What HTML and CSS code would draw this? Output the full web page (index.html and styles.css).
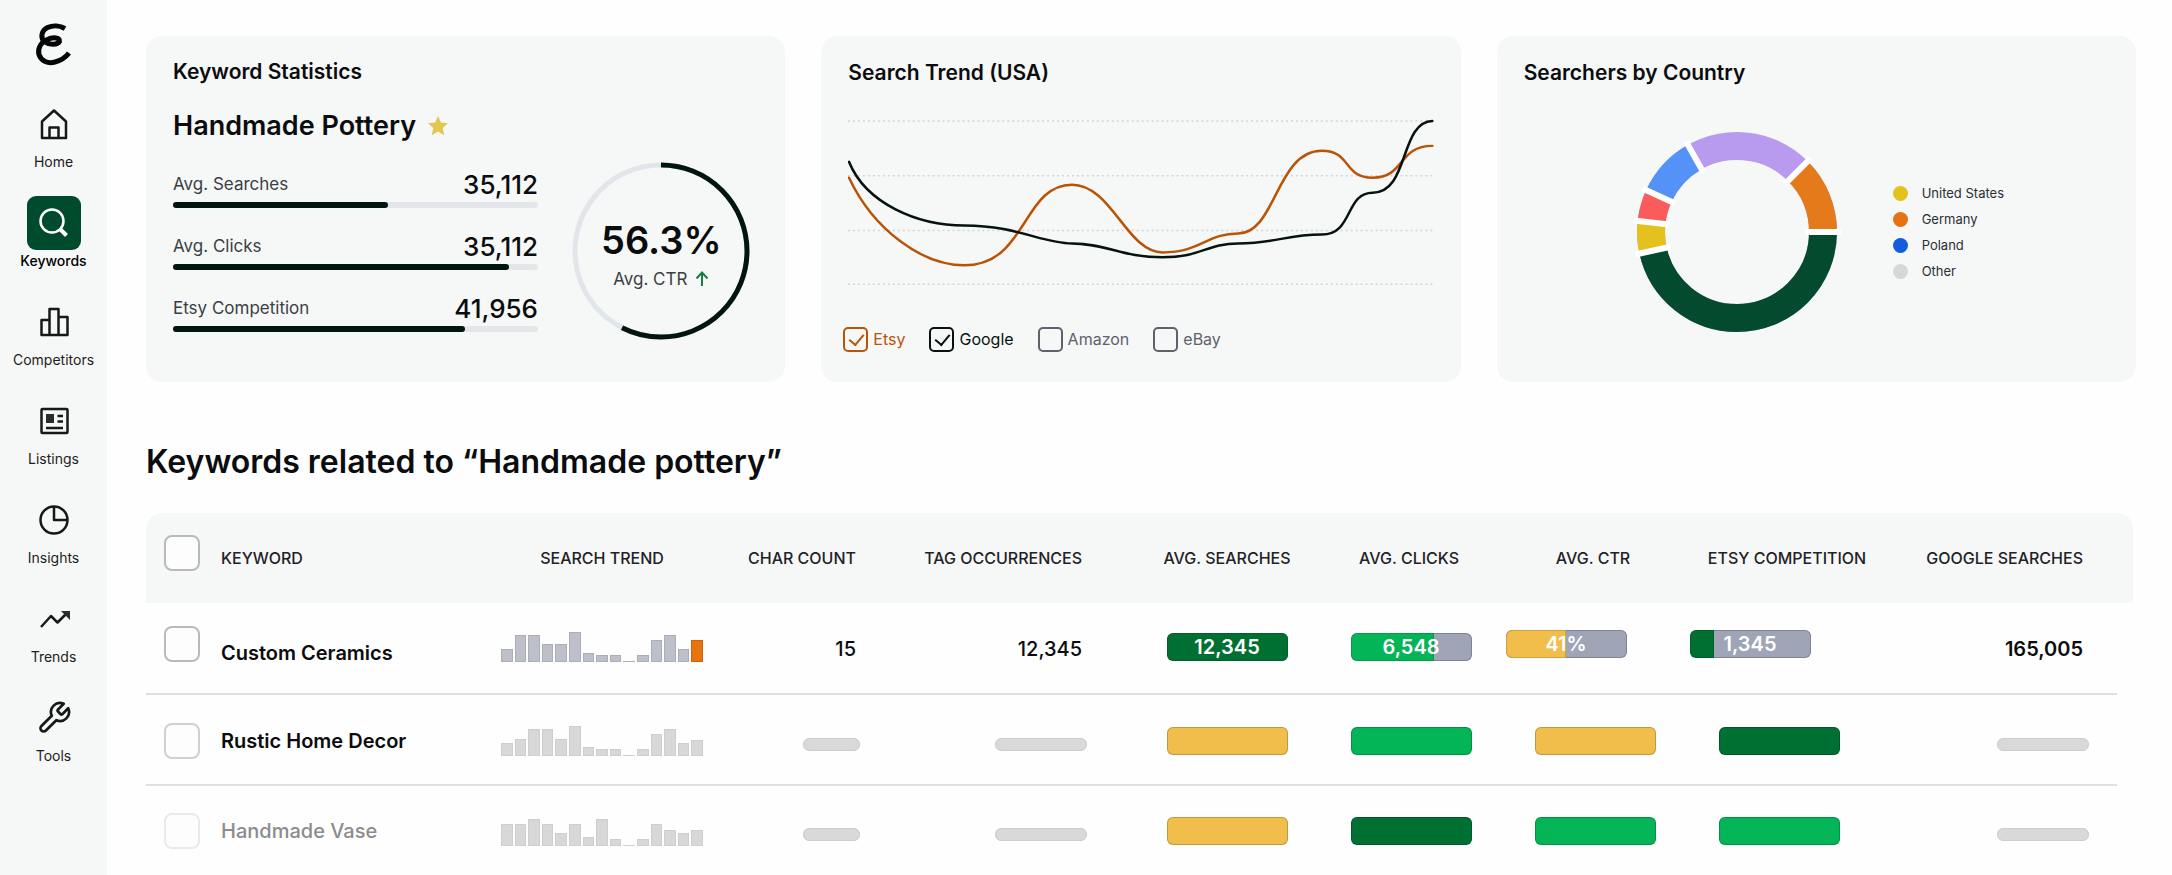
FILE: index.html
```html
<!DOCTYPE html>
<html lang="en">
<head>
<meta charset="utf-8">
<title>Keyword Research</title>
<link rel="stylesheet" href="styles.css">
</head>
<body>
<div class="app">
  <aside class="sidebar">
    <a class="logo" href="#" aria-label="Home page">
      <svg viewBox="0 0 60 60" width="60" height="60"><path d="M41 14.500C36 11.500 29 11 23.500 13.500 17 17 16 24 21 28 25 31 34 31 35.500 27.500 36.500 23.500 29 22.500 22.500 26 16 29.500 13.500 35 15 40.500 17 47 24 50 31 48 37 46.500 41.500 43.500 45 39"/></svg>
    </a>
    <nav class="nav">
      <a class="nav-item" href="#"><span class="nav-icon"><svg viewBox="0 0 36 36"><path d="M6 15.500 18 4.500 30 15.500V32H6ZM13.500 32V21.500H22.500V32"/></svg></span>Home</a>
      <a class="nav-item is-active" href="#" aria-current="page"><span class="nav-icon"><svg viewBox="0 0 36 36"><circle cx="16" cy="16" r="11.500"/><path class="thick" d="M24.500 24.500 30.500 30.500"/></svg></span>Keywords</a>
      <a class="nav-item" href="#"><span class="nav-icon"><svg viewBox="0 0 36 36"><path d="M13.500 31H5.500V16H13.500M22.500 31V13H31.500V31H13.500V5H22.500V31"/></svg></span>Competitors</a>
      <a class="nav-item" href="#"><span class="nav-icon"><svg viewBox="0 0 36 36"><rect x="5.500" y="6" width="26" height="24" rx="1"/><path class="solid" d="M10 11H18V20H10Z"/><path d="M21.500 13H27M21.500 18.500H27M10 25H27"/></svg></span>Listings</a>
      <a class="nav-item" href="#"><span class="nav-icon"><svg viewBox="0 0 36 36"><circle cx="18" cy="18" r="13.500"/><path d="M18 5V18H31"/></svg></span>Insights</a>
      <a class="nav-item" href="#"><span class="nav-icon"><svg viewBox="0 0 36 36"><path d="M5 26 15 15 21.500 21.500 30 13"/><path class="solid" d="M25 10H34V19Z"/></svg></span>Trends</a>
      <a class="nav-item" href="#"><span class="nav-icon"><svg viewBox="0 0 24 24"><path class="fine" d="M14.700 6.300a1 1 0 0 0 0 1.400l1.600 1.600a1 1 0 0 0 1.400 0l3.770-3.770a6 6 0 0 1-7.940 7.940l-6.910 6.910a2.120 2.120 0 0 1-3-3l6.910-6.910a6 6 0 0 1 7.940-7.940l-3.760 3.760z"/></svg></span>Tools</a>
    </nav>
  </aside>

  <main class="main">
    <section class="cards">
      <article class="card">
        <h2 class="card-title">Keyword Statistics</h2>
        <div class="term">Handmade Pottery
          <svg class="star" viewBox="0 0 20 20" width="20" height="20"><path d="M10 0 12.900 6.500 20 7.300 14.700 12 16.200 19.200 10 15.500 3.800 19.200 5.300 12 0 7.300 7.100 6.500Z"/></svg>
        </div>
        <div class="stats">
          <div class="stat-list">
            <div class="stat"><div class="stat-head"><span>Avg. Searches</span><strong>35,112</strong></div><div class="track"><div class="fill" style="width:59%"></div></div></div>
            <div class="stat"><div class="stat-head"><span>Avg. Clicks</span><strong>35,112</strong></div><div class="track"><div class="fill" style="width:92%"></div></div></div>
            <div class="stat"><div class="stat-head"><span>Etsy Competition</span><strong>41,956</strong></div><div class="track"><div class="fill" style="width:80%"></div></div></div>
          </div>
          <div class="ring">
            <svg viewBox="0 0 178 178" width="178" height="178"><circle class="ring-track" cx="89" cy="89" r="86"/><circle class="ring-value" cx="89" cy="89" r="86" pathLength="100" stroke-dasharray="57.500 100" transform="rotate(-90 89 89)"/></svg>
            <div class="ring-text">
              <strong>56.3%</strong>
              <span>Avg. CTR <svg viewBox="0 0 14 16" width="14" height="16"><path d="M7 15V2M1.500 7.500 7 1.500 12.500 7.500"/></svg></span>
            </div>
          </div>
        </div>
      </article>

      <article class="card">
        <h2 class="card-title">Search Trend (USA)</h2>
        <svg class="chart" viewBox="0 0 588 168">
          <path class="grid" d="M0 2H588M0 57H588M0 112H588M0 166H588"/>
          <path class="line etsy-line" d="M1 59C26 112 75 147 117 147 180 147 175 66 225 66 265 66 280 134 316 134 355 134 360 115 392 115 430 115 430 32 476 32 506 32 497 59 527 59 560 59 552 27 587 27"/>
          <path class="line google-line" d="M1 43C18 85 70 107 117 107 170 107 195 125 225 125 260 125 275 139 316 139 355 139 360 125 392 125 430 125 440 116 476 116 508 116 499 74 527 74 564 74 554 3 587 2"/>
        </svg>
        <div class="sources">
          <label class="source etsy"><input type="checkbox" checked>Etsy</label>
          <label class="source google"><input type="checkbox" checked>Google</label>
          <label class="source"><input type="checkbox">Amazon</label>
          <label class="source"><input type="checkbox">eBay</label>
        </div>
      </article>

      <article class="card">
        <h2 class="card-title">Searchers by Country</h2>
        <div class="countries">
          <svg class="donut" viewBox="0 0 212 212" width="212" height="212">
            <g transform="rotate(-90 106 106)">
              <circle class="seg c-purple" cx="106" cy="106" r="86"/>
              <circle class="seg c-orange" cx="106" cy="106" r="86" pathLength="360" stroke-dasharray="45 315" stroke-dashoffset="-45"/>
              <circle class="seg c-green" cx="106" cy="106" r="86" pathLength="360" stroke-dasharray="167.500 192.500" stroke-dashoffset="-90"/>
              <circle class="seg c-yellow" cx="106" cy="106" r="86" pathLength="360" stroke-dasharray="18.800 341.200" stroke-dashoffset="-257.500"/>
              <circle class="seg c-red" cx="106" cy="106" r="86" pathLength="360" stroke-dasharray="18.400 341.600" stroke-dashoffset="-276.300"/>
              <circle class="seg c-blue" cx="106" cy="106" r="86" pathLength="360" stroke-dasharray="35.900 324.100" stroke-dashoffset="-294.700"/>
              <g class="cuts">
                <path d="M174 106H210" transform="rotate(45 106 106)"/>
                <path d="M174 106H210" transform="rotate(90 106 106)"/>
                <path d="M174 106H210" transform="rotate(257.500 106 106)"/>
                <path d="M174 106H210" transform="rotate(276.300 106 106)"/>
                <path d="M174 106H210" transform="rotate(294.700 106 106)"/>
                <path d="M174 106H210" transform="rotate(330.600 106 106)"/>
              </g>
            </g>
          </svg>
          <ul class="legend">
            <li><i class="dot d-yellow"></i>United States</li>
            <li><i class="dot d-orange"></i>Germany</li>
            <li><i class="dot d-blue"></i>Poland</li>
            <li><i class="dot d-gray"></i>Other</li>
          </ul>
        </div>
      </article>
    </section>

    <h1 class="heading">Keywords related to “Handmade pottery”</h1>

    <table class="table">
      <colgroup>
        <col class="w-check"><col><col class="w-trend"><col class="w-char"><col class="w-tag"><col class="w-bar"><col class="w-bar"><col class="w-bar"><col class="w-bar"><col class="w-google">
      </colgroup>
      <thead>
        <tr>
          <th class="check raised"><input type="checkbox" aria-label="Select all"></th>
          <th class="left">Keyword</th><th>Search Trend</th><th class="char">Char Count</th><th class="tag">Tag Occurrences</th><th>Avg. Searches</th><th class="nudge">Avg. Clicks</th><th class="nudge">Avg. CTR</th><th class="push">Etsy Competition</th><th class="google-col">Google Searches</th>
        </tr>
      </thead>
      <tbody>
        <tr>
          <td class="check raised"><input type="checkbox" aria-label="Select Custom Ceramics"></td>
          <td class="name lowered">Custom Ceramics</td>
          <td class="lifted"><div class="spark main-spark"><i style="height:13px"></i><i style="height:27px"></i><i style="height:27px"></i><i style="height:18px"></i><i style="height:18px"></i><i style="height:30px"></i><i style="height:9px"></i><i style="height:7px"></i><i style="height:7px"></i><i style="height:1px"></i><i style="height:7px"></i><i style="height:22px"></i><i style="height:27px"></i><i style="height:13px"></i><i class="hot" style="height:22px"></i></div></td>
          <td class="char num">15</td>
          <td class="tag num">12,345</td>
          <td class="lifted"><div class="meter"><div class="part dark" style="width:100%"></div><b>12,345</b></div></td>
          <td class="lifted"><div class="meter"><div class="part green" style="width:69%"></div><b>6,548</b></div></td>
          <td class="early"><div class="meter"><div class="part amber" style="width:50%"></div><b>41%</b></div></td>
          <td class="early"><div class="meter"><div class="part dark" style="width:20%"></div><b>1,345</b></div></td>
          <td class="google-col num strong">165,005</td>
        </tr>
        <tr>
          <td class="check soft"><input type="checkbox" aria-label="Select Rustic Home Decor"></td>
          <td class="name">Rustic Home Decor</td>
          <td><div class="spark"><i style="height:13px"></i><i style="height:17px"></i><i style="height:27px"></i><i style="height:27px"></i><i style="height:17px"></i><i style="height:30px"></i><i style="height:9px"></i><i style="height:7px"></i><i style="height:7px"></i><i style="height:1px"></i><i style="height:7px"></i><i style="height:22px"></i><i style="height:27px"></i><i style="height:13px"></i><i style="height:16px"></i></div></td>
          <td class="char-pill"><div class="pill short"></div></td>
          <td class="tag-pill"><div class="pill"></div></td>
          <td><div class="meter amber"></div></td>
          <td><div class="meter green"></div></td>
          <td><div class="meter amber"></div></td>
          <td><div class="meter dark"></div></td>
          <td class="google-pill"><div class="pill"></div></td>
        </tr>
        <tr>
          <td class="check faint"><input type="checkbox" aria-label="Select Handmade Vase"></td>
          <td class="name muted">Handmade Vase</td>
          <td><div class="spark"><i style="height:22px"></i><i style="height:22px"></i><i style="height:27px"></i><i style="height:22px"></i><i style="height:13px"></i><i style="height:22px"></i><i style="height:9px"></i><i style="height:27px"></i><i style="height:7px"></i><i style="height:1px"></i><i style="height:7px"></i><i style="height:22px"></i><i style="height:16px"></i><i style="height:13px"></i><i style="height:16px"></i></div></td>
          <td class="char-pill"><div class="pill short"></div></td>
          <td class="tag-pill"><div class="pill"></div></td>
          <td><div class="meter amber"></div></td>
          <td><div class="meter dark"></div></td>
          <td><div class="meter green"></div></td>
          <td><div class="meter green"></div></td>
          <td class="google-pill"><div class="pill"></div></td>
        </tr>
      </tbody>
    </table>
  </main>
</div>
</body>
</html>
```
FILE: styles.css
```css
* { box-sizing: border-box; }

body {
  margin: 0;
  background: #fefefe;
  color: #0b0c0e;
  font-family: Inter, "Liberation Sans", sans-serif;
}

svg { display: block; flex: none; }

.app {
  display: flex;
  min-height: 100vh;
}

/* Sidebar */
.sidebar {
  flex: 0 0 107px;
  display: flex;
  flex-direction: column;
  align-items: center;
  padding-top: 14px;
  background: #f6f7f7;
}

.logo path {
  fill: none;
  stroke: #050505;
  stroke-width: 5;
}

.nav {
  display: flex;
  flex-direction: column;
  gap: 24px;
  padding-top: 23px;
}

.nav-item {
  display: flex;
  flex-direction: column;
  align-items: center;
  gap: 1px;
  color: #1c1d20;
  font-size: 14px;
  line-height: 20px;
  text-decoration: none;
}

.nav-icon {
  display: flex;
  align-items: center;
  justify-content: center;
  width: 54px;
  height: 54px;
  border-radius: 9px;
}

.nav-icon svg {
  width: 36px;
  height: 36px;
  fill: none;
  stroke: #16181a;
  stroke-width: 2.5;
  stroke-linejoin: round;
}

.nav-icon .solid { fill: #2a2c2e; stroke: none; }
.nav-icon .thick { stroke-width: 4; }
.nav-icon .fine { stroke-width: 1.8; }

.is-active { color: #000; font-weight: 500; }
.is-active .nav-icon { background: #004a2e; }
.is-active .nav-icon svg { stroke: #fff; }

/* Cards */
.main {
  flex: 1;
  min-width: 0;
  padding: 36px 36px 0 39px;
}

.cards {
  display: grid;
  grid-template-columns: repeat(3, 1fr);
  gap: 36px;
}

.card {
  min-height: 346px;
  padding: 22px 27px 0;
  border-radius: 16px;
  background: #f6f7f7;
}

.card + .card { padding-top: 23px; }

.card-title {
  margin: 0;
  font-size: 21px;
  font-weight: 600;
  line-height: 28px;
}

.term {
  display: flex;
  align-items: center;
  gap: 12px;
  margin-top: 22px;
  font-size: 27px;
  font-weight: 600;
  line-height: 36px;
}

.star { fill: #e2c650; }

.stats {
  display: flex;
  justify-content: space-between;
  align-items: flex-start;
  padding: 18px 8px 0 0;
}

.stat-list {
  flex: 0 1 365px;
  display: flex;
  flex-direction: column;
  gap: 20px;
  padding-top: 4px;
}

.stat-head {
  display: flex;
  justify-content: space-between;
  align-items: center;
  height: 36px;
  color: #3a3f45;
  font-size: 17px;
}

.stat-head strong {
  color: #0b0c0e;
  font-size: 26px;
  font-weight: 500;
}

.track {
  height: 6px;
  border-radius: 3px;
  background: #e3e7ea;
}

.fill {
  height: 6px;
  border-radius: 3px;
  background: #02150f;
}

.ring { display: grid; }
.ring > * { grid-area: 1 / 1; }

.ring-track, .ring-value {
  fill: none;
  stroke: #e1e6ea;
  stroke-width: 5;
}

.ring-value { stroke: #02150f; }

.ring-text {
  display: flex;
  flex-direction: column;
  align-items: center;
  justify-content: center;
  padding-top: 7px;
}

.ring-text strong {
  font-size: 38px;
  font-weight: 600;
  line-height: 48px;
}

.ring-text span {
  display: flex;
  align-items: center;
  gap: 8px;
  color: #3a3f45;
  font-size: 17px;
  line-height: 30px;
}

.ring-text span svg {
  fill: none;
  stroke: #178040;
  stroke-width: 2;
}

/* Trend chart */
.chart {
  width: 100%;
  margin-top: 32px;
}

.grid {
  stroke: #d2d5d7;
  stroke-width: 1.5;
  stroke-dasharray: 2 3;
}

.line {
  fill: none;
  stroke-width: 2.5;
  stroke-linecap: round;
}

.etsy-line { stroke: #b95407; }
.google-line { stroke: #07130f; }

.sources {
  display: flex;
  gap: 24px;
  margin: 41px 0 0 -5px;
}

.source {
  display: flex;
  align-items: center;
  gap: 5px;
  color: #5e626b;
  font-size: 16px;
  line-height: 25px;
}

input[type="checkbox"] {
  display: block;
  appearance: none;
  margin: 0;
  background: #fdfdfd;
  color: inherit;
}

.source input[type="checkbox"] {
  width: 25px;
  height: 25px;
  border: 2px solid currentColor;
  border-radius: 5px;
  background: none;
}

.source input:checked::before {
  content: "";
  display: block;
  width: 7px;
  height: 12px;
  margin: 2px 7px;
  border: solid currentColor;
  border-width: 0 2px 2px 0;
  transform: rotate(40deg);
}

.source.etsy { color: #b95407; }
.source.google { color: #07130f; }

/* Countries */
.countries {
  display: flex;
  align-items: center;
  gap: 50px;
  padding: 39px 0 0 107px;
}

.seg { fill: none; stroke-width: 28; }
.c-green { stroke: #044a2e; }
.c-yellow { stroke: #e4c11c; }
.c-red { stroke: #fb5b5b; }
.c-blue { stroke: #5492f7; }
.c-purple { stroke: #b89bee; }
.c-orange { stroke: #e57a1a; }
.cuts { stroke: #fff; stroke-width: 6; }

.legend {
  margin: 0;
  padding: 0;
  list-style: none;
}

.legend li {
  display: flex;
  align-items: center;
  gap: 14px;
  color: #2b2f36;
  font-size: 13px;
  line-height: 26px;
}

.dot {
  width: 15px;
  height: 15px;
  border-radius: 50%;
}

.d-yellow { background: #e4c11c; }
.d-orange { background: #e57313; }
.d-blue { background: #145be0; }
.d-gray { background: #d6d7d8; }

/* Table */
.heading {
  margin: 60px 0 31px;
  font-size: 32px;
  font-weight: 600;
  line-height: 40px;
}

.table {
  width: calc(100% - 3px);
  border-collapse: separate;
  border-spacing: 0;
  table-layout: fixed;
}

.w-check { width: 75px; }
.w-trend { width: 212px; }
.w-char { width: 152px; }
.w-tag { width: 275px; }
.w-bar { width: 184px; }
.w-google { width: 262px; }

.table th, .table td { padding: 0; }

.table th {
  height: 90px;
  background: #f6f7f7;
  color: #1f2226;
  font-size: 16px;
  font-weight: 500;
  text-transform: uppercase;
  white-space: nowrap;
}

.table th:first-child { border-top-left-radius: 16px; }
.table th:last-child { border-top-right-radius: 16px; }

tbody tr {
  height: 92px;
  background: linear-gradient(#dedfe0, #dedfe0) left bottom / calc(100% - 16px) 2px no-repeat;
}

tbody tr + tr { height: 91px; }
tbody tr:last-child { height: 89px; background: none; }

.table .left { text-align: left; }
.table .check { padding-left: 18px; }
.table .raised { padding-bottom: 10px; }
.table .lifted { padding-bottom: 4px; }
.table .nudge { padding-right: 4px; }
.table .push { padding-left: 16px; }
.table .lowered { padding-top: 8px; }
.table .char { padding-right: 4px; text-align: right; }
.table .tag { padding-right: 53px; text-align: right; }
.table .google-col { padding-right: 50px; text-align: right; }
.table .tag-pill { padding: 8px 48px 0 0; }
.table .char-pill { padding-top: 8px; }
.table .google-pill { padding: 8px 44px 0 0; }
.table .early { padding: 0 58px 10px 0; }

.check input {
  width: 36px;
  height: 36px;
  border: 2px solid #b9babb;
  border-radius: 8px;
}

.soft input { border-color: #cfd0d1; }
.faint input { border-color: #e9eaea; }

.name { font-size: 20px; font-weight: 600; }
.table .muted { color: #8b8c8e; font-weight: 500; }
.num { font-size: 20px; font-weight: 500; }
.table .strong { font-weight: 600; }

.spark {
  display: flex;
  align-items: flex-end;
  gap: 2px;
  width: 202px;
  height: 30px;
  margin: 0 auto;
}

.spark i {
  flex: 1;
  background: #d8d8d8;
  box-shadow: inset 0 0 0 1px #cecece;
}

.main-spark i { background: #bdc0ca; box-shadow: inset 0 0 0 1px #acaeb6; }
.main-spark .hot { background: #e8740c; box-shadow: inset 0 0 0 1px #c9650d; }

.pill {
  width: 92px;
  height: 13px;
  margin-left: auto;
  border-radius: 7px;
  background: #d9d9d9;
  box-shadow: inset 0 0 0 1px #cdcdcd;
}

.short { width: 57px; }

.meter {
  display: grid;
  width: 121px;
  height: 28px;
  margin: 0 auto;
  overflow: hidden;
  border-radius: 6px;
  background: #9fa5b7;
  box-shadow: inset 0 0 0 1px rgba(0, 0, 0, 0.2);
}

.meter > * { grid-area: 1 / 1; }

.part {
  border-radius: 6px 0 0 6px;
  box-shadow: inset 0 0 0 1px rgba(0, 0, 0, 0.15);
}

.meter b {
  align-self: center;
  color: #fff;
  font-size: 20px;
  font-weight: 600;
  line-height: 28px;
  text-align: center;
}

.meter.dark, .part.dark { background: #007032; }
.meter.green, .part.green { background: #04b557; }
.meter.amber, .part.amber { background: #f2be4b; }
```
